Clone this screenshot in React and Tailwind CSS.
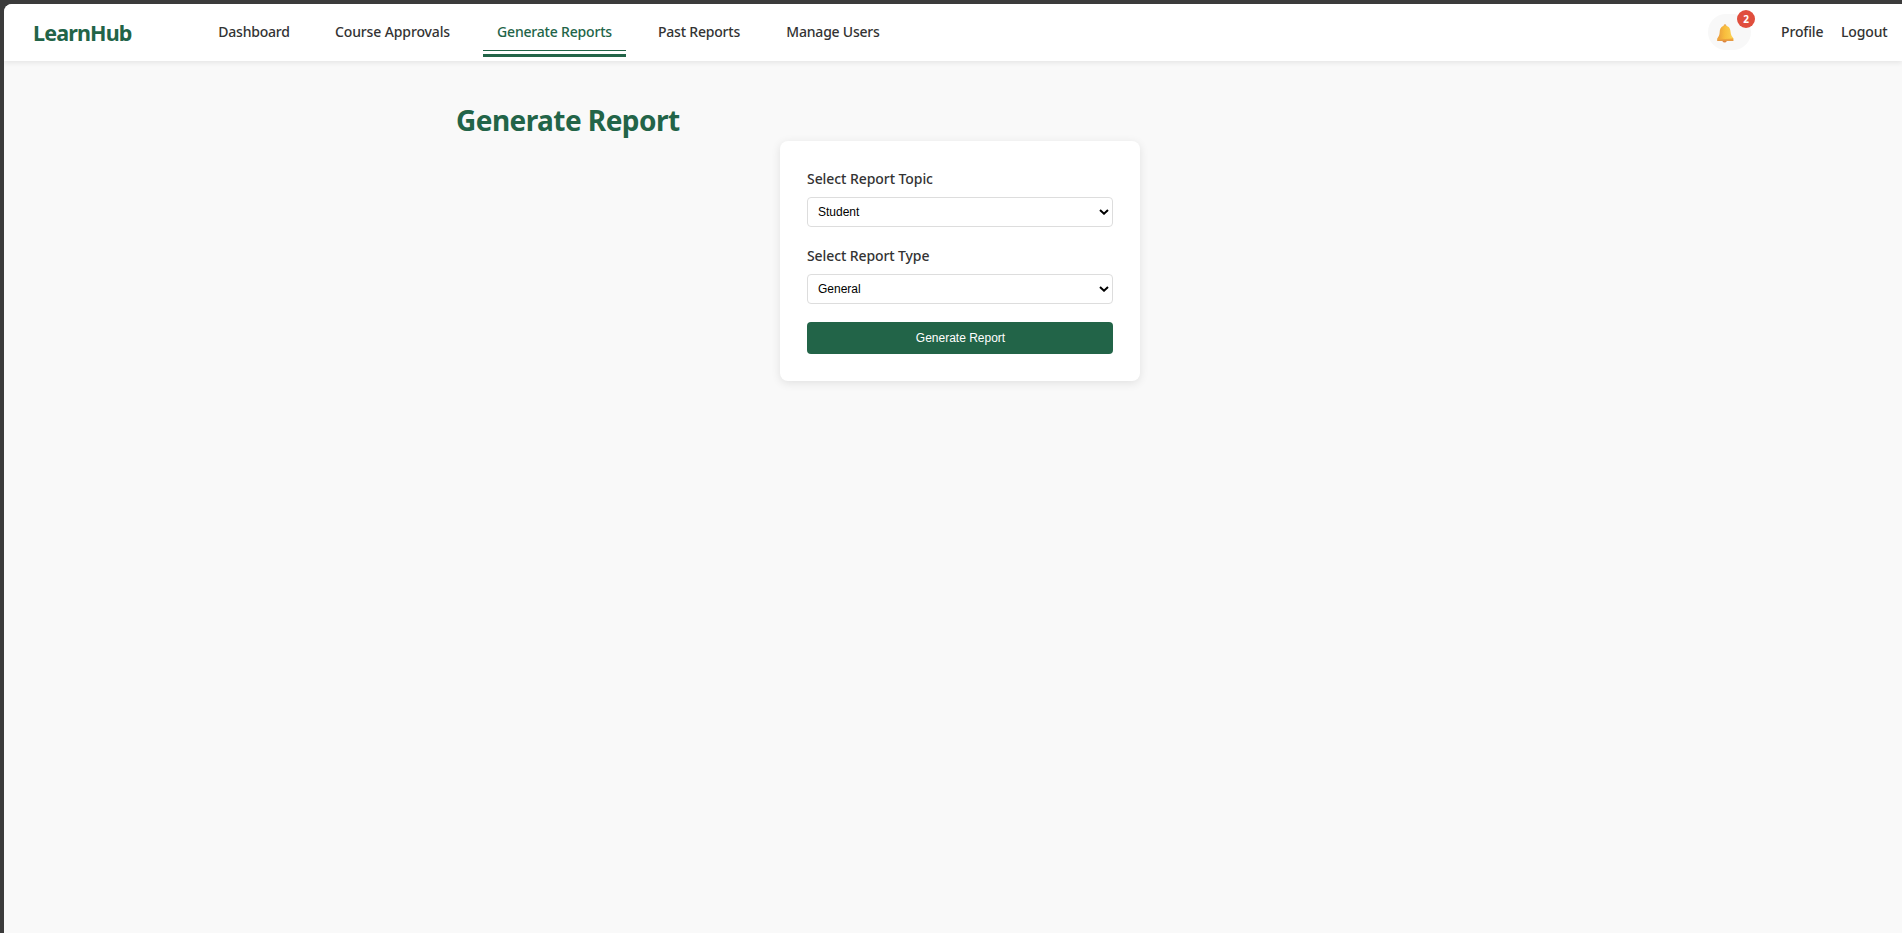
import React from 'react';

const links = [
  { label: 'Dashboard', item: 'ml-[74px] w-[98px]', text: 'tracking-[-0.2px]' },
  { label: 'Course Approvals', item: 'ml-[18px] w-[143px]', text: 'tracking-[-0.12px]' },
  { label: 'Generate Reports', item: 'ml-[19px] w-[143px]', text: 'tracking-[-0.19px]', active: true },
  { label: 'Past Reports', item: 'ml-[18px] w-[110px]', text: 'tracking-[-0.2px]' },
  { label: 'Manage Users', item: 'ml-[19px] w-[120px]', text: 'tracking-[-0.22px]' },
];

function Bell() {
  return (
    <svg className="ml-[9px] mt-[3px] h-[19px] w-[17px]" viewBox="0 0 17 19">
      <defs>
        <linearGradient id="bell" x1="0" x2="1">
          <stop offset="0" stopColor="#e99b3c" />
          <stop offset=".45" stopColor="#f8bd3d" />
          <stop offset="1" stopColor="#fcd354" />
        </linearGradient>
      </defs>
      <circle cx="8" cy="1.6" r="1.3" fill="#e9a95a" />
      <ellipse cx="7.6" cy="17.2" rx="1.8" ry="1.2" fill="#dc8440" />
      <path d="M8 1.8C4.5 1.8 3 4.2 2.7 8 2.5 11 1.8 12.5.6 14v2.5h15.6V14c-1.4-1.5-2.3-3-2.6-6C13.2 4 11.5 1.8 8 1.8Z" fill="url(#bell)" />
      <path d="M.3 14.2c4.5 1.1 11 1.1 16 0v2.6H.3Z" fill="#f0a93c" />
      <path d="M.3 15.8h16v1H.3Z" fill="#e2913f" />
    </svg>
  );
}

function SelectField({ label, value, text }) {
  return (
    <div className="h-[77px]">
      <label className={`block h-[29px] whitespace-nowrap pt-[1px] text-[14px] leading-[20px] font-medium text-[#333] ${text}`}>
        {label}
      </label>
      <div className="flex h-[30px] items-center justify-between rounded-[4px] border border-[#ddd] bg-white pr-[3px] pl-[10px] font-['Liberation_Sans',Arial,sans-serif] text-[12px] text-black">
        <span>{value}</span>
        <svg className="h-[6px] w-[10px]" viewBox="0 0 10 6" fill="none">
          <path d="M1 1l4 3.7L9 1" stroke="#000" strokeWidth="2" />
        </svg>
      </div>
    </div>
  );
}

export default function App() {
  return (
    <div className="h-[933px] overflow-hidden bg-[#3b3b3b] pt-[4px] pl-[4px] font-['Noto_Sans','Open_Sans',sans-serif]">
      <div className="h-[929px] overflow-hidden rounded-tl-[8px] bg-[#f9f9f9]">
        <header className="flex h-[57px] items-start bg-white shadow-[0_2px_5px_rgba(0,0,0,0.08)]">
          <div className="mt-[14px] ml-[29px] w-[98px] whitespace-nowrap text-[21.5px] leading-[30px] font-bold tracking-[-0.85px] text-[#226448]">LearnHub</div>
          <nav className="flex">
            {links.map((l) => (
              <div key={l.label} className={`h-[53px] shrink-0 ${l.item}`}>
                <div className={`flex h-[47px] justify-center whitespace-nowrap pt-[18px] text-[14px] leading-[19px] font-medium ${l.text} ${l.active ? 'border-b border-[#226448] text-[#226448]' : 'text-[#333]'}`}>
                  {l.label}
                </div>
                {l.active && <div className="mt-[3px] h-[3px] bg-[#226448]" />}
              </div>
            ))}
          </nav>
          <div className="relative mt-[10px] mr-[30px] ml-auto flex h-[36px] w-[43px] items-center rounded-[18px] bg-[#f8f8f8]">
            <Bell />
            <span className="absolute -top-[4px] -right-[4px] flex h-[18px] w-[18px] items-center justify-center rounded-full bg-[#e04e3d] text-[10px] leading-[18px] font-bold text-white">2</span>
          </div>
          <a className="mt-[18px] w-[60px] text-[14px] leading-[19px] font-medium tracking-[-0.15px] whitespace-nowrap text-[#333]">Profile</a>
          <a className="mt-[18px] w-[61px] text-[14px] leading-[19px] font-medium tracking-[-0.15px] whitespace-nowrap text-[#333]">Logout</a>
        </header>
        <main className="pt-[40px]">
          <h1 className="ml-[452px] h-[40px] text-[28px] leading-[38px] font-bold tracking-[-0.55px] whitespace-nowrap text-[#226448]">Generate Report</h1>
          <section className="ml-[776px] h-[240px] w-[360px] rounded-[8px] bg-white px-[27px] pt-[27px] shadow-[0_2px_10px_rgba(0,0,0,0.1)]">
            <SelectField label="Select Report Topic" value="Student" text="tracking-[-0.07px]" />
            <SelectField label="Select Report Type" value="General" text="tracking-[-0.1px]" />
            <button className="flex h-[32px] w-full items-center justify-center rounded-[4px] bg-[#226448] pl-[1px] font-['Liberation_Sans',Arial,sans-serif] text-[12px] text-white">Generate Report</button>
          </section>
        </main>
      </div>
    </div>
  );
}
